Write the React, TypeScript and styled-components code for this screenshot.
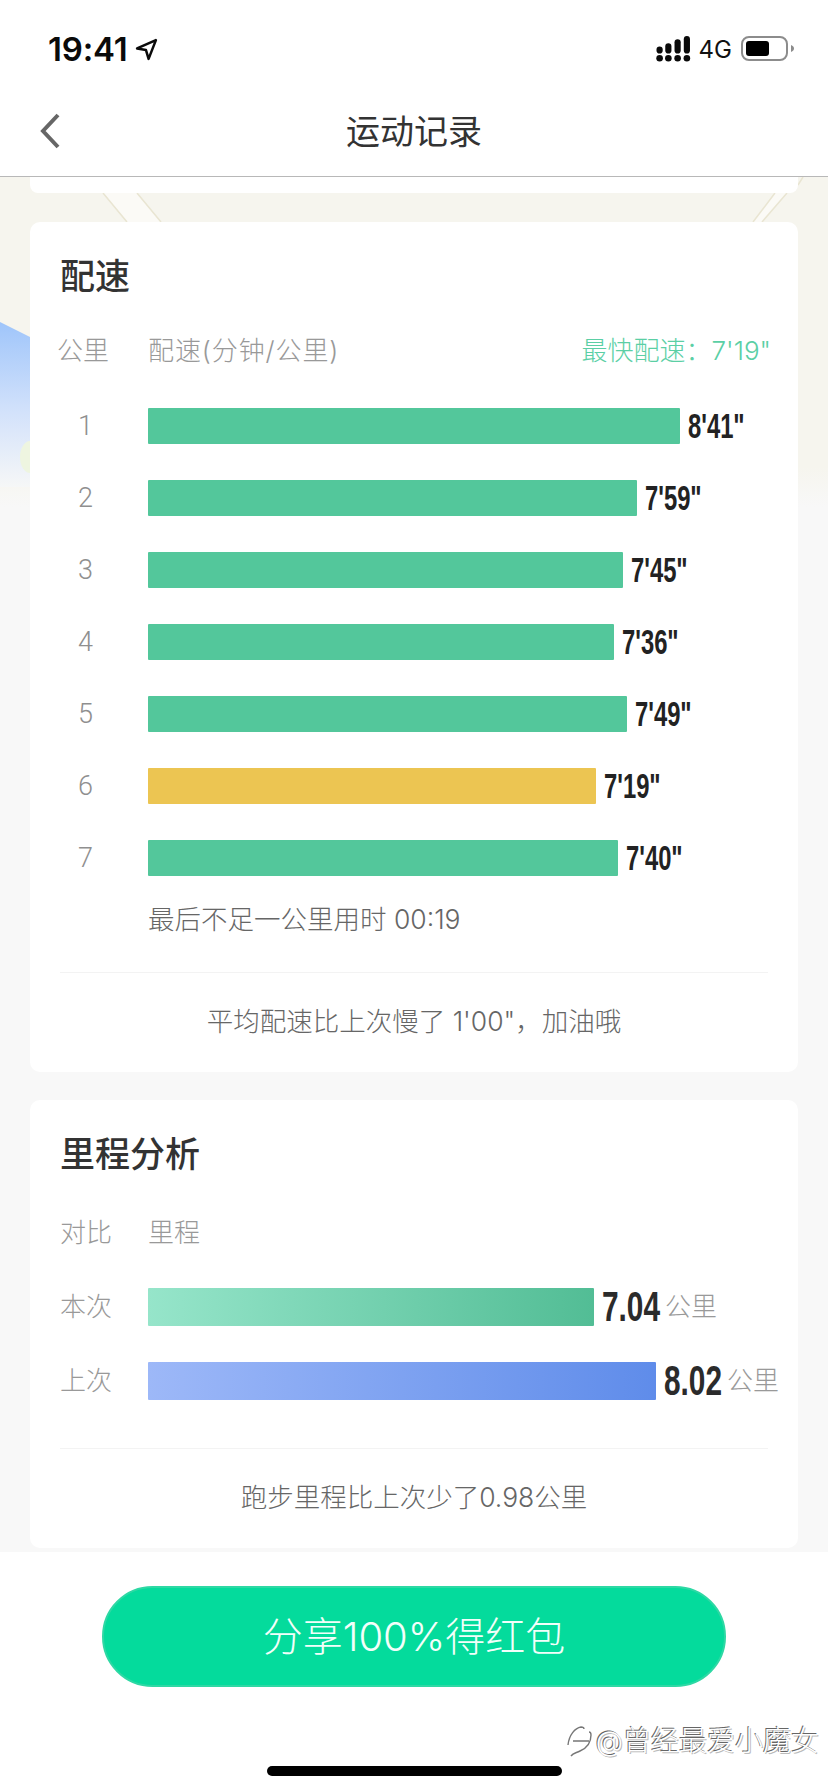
import { FC } from 'react';
import styled, { createGlobalStyle } from 'styled-components';

const CJK = `"Noto Sans CJK SC", "Noto Sans", sans-serif`;
const BODY = `Inter, ${CJK}`;

const GlobalStyle = createGlobalStyle`
  html, body {
    margin: 0;
    padding: 0;
    background: #fff;
    font-family: ${CJK};
  }
`;

const Page = styled.div`
  position: relative;
  display: flex;
  flex-direction: column;
  width: 828px;
  height: 1792px;
  overflow: hidden;
  background: #fff;
`;

const StatusBar = styled.div`
  display: flex;
  align-items: center;
  justify-content: space-between;
  height: 88px;
  padding: 10px 33px 0 48px;
  box-sizing: border-box;
`;

const StatusGroup = styled.div`
  display: flex;
  align-items: center;
`;

const Clock = styled.span`
  font-family: Inter, "Liberation Sans", sans-serif;
  font-size: 33px;
  font-weight: 600;
  letter-spacing: -0.2px;
  color: #0a0a0a;
  line-height: 36px;
  margin-right: 8px;
`;

const Network = styled.span`
  font-family: Inter, "Liberation Sans", sans-serif;
  font-size: 24px;
  color: #111;
  margin: 1px 9px 0 8px;
  line-height: 26px;
`;

const NavBar = styled.div`
  position: relative;
  display: flex;
  align-items: center;
  justify-content: center;
  height: 89px;
  box-sizing: border-box;
  padding-bottom: 4px;
  border-bottom: 1px solid #b8b8b8;
`;

const NavBack = styled.svg`
  position: absolute;
  left: 38px;
  top: 24px;
`;

const NavTitle = styled.h1`
  margin: 0;
  font-size: 34px;
  font-weight: 400;
  color: #333;
  line-height: 44px;
`;

const Content = styled.div`
  position: relative;
  flex: none;
  height: 1375px;
  box-sizing: border-box;
  padding: 0 30px;
  background: linear-gradient(
    to bottom,
    #f6f5ee 0,
    #f6f5ee 290px,
    #f8f8f8 330px,
    #f8f8f8 100%
  );
`;

const Backdrop = styled.svg`
  position: absolute;
  left: 0;
  top: 0;
`;

const CardStub = styled.div`
  position: relative;
  height: 16px;
  margin-bottom: 29px;
  background: #fff;
  border-radius: 0 0 8px 8px;
`;

const Card = styled.section`
  position: relative;
  display: flex;
  flex-direction: column;
  padding: 30px 30px 31px;
  margin-bottom: 28px;
  background: #fff;
  border-radius: 10px;
`;

const CardTitle = styled.h2`
  margin: 0;
  height: 46px;
  font-size: 35px;
  font-weight: 500;
  line-height: 43px;
  color: #333;
`;

const HeadRow = styled.div<{ $top: number }>`
  display: flex;
  align-items: center;
  height: 36px;
  box-sizing: border-box;
  padding-bottom: 4px;
  margin-top: ${(p) => p.$top}px;
  font-family: ${BODY};
  font-size: 26px;
  font-weight: 300;
  color: #999;
`;

const HeadLabel = styled.span<{ $shift?: number }>`
  flex: none;
  width: ${(p) => 88 + (p.$shift ?? 0)}px;
  margin-left: ${(p) => -(p.$shift ?? 0)}px;
`;

const HeadMain = styled.span<{ $tracking?: number }>`
  flex: 1;
  letter-spacing: ${(p) => p.$tracking ?? 0}px;
`;

const FastLabel = styled.span`
  color: #5bcfa5;
  margin-right: -3px;
`;

const PaceList = styled.div`
  display: flex;
  flex-direction: column;
  gap: 36px;
  margin-top: 40px;
`;

const PaceRow = styled.div`
  display: flex;
  align-items: center;
  height: 36px;
`;

const PaceIndex = styled.span`
  flex: none;
  width: 51px;
  margin-right: 37px;
  text-align: center;
  font-family: Roboto, ${CJK};
  font-size: 27px;
  font-weight: 300;
  color: #8f8f8f;
`;

const Bar = styled.div<{ $width: number; $fill: string }>`
  flex: none;
  width: ${(p) => p.$width}px;
  height: 100%;
  background: ${(p) => p.$fill};
  border-radius: 1px;
`;

// no condensed face is installed, so the bold numbers are squeezed
const PaceValue = styled.span`
  flex: none;
  width: 57px;
  margin-left: 8px;
  font-family: "Liberation Sans", sans-serif;
  font-size: 35px;
  font-weight: 700;
  line-height: 36px;
  white-space: nowrap;
  color: #222;
  transform: scaleX(0.68);
  transform-origin: left center;
`;

const Note = styled.div`
  height: 36px;
  margin: 25px 0 0 88px;
  font-family: ${BODY};
  font-size: 26.5px;
  font-weight: 300;
  line-height: 36px;
  color: #666;
`;

const Divider = styled.div<{ $top: number }>`
  height: 1px;
  margin-top: ${(p) => p.$top}px;
  background: #f3f3f3;
`;

const Summary = styled.div`
  height: 36px;
  margin-top: 32px;
  text-align: center;
  font-family: ${BODY};
  font-size: 26.5px;
  font-weight: 300;
  line-height: 32px;
  color: #666;
`;

const MileList = styled.div`
  display: flex;
  flex-direction: column;
  gap: 36px;
  margin-top: 38px;
`;

const MileRow = styled.div`
  display: flex;
  align-items: center;
  height: 38px;
`;

const MileLabel = styled.span`
  flex: none;
  width: 88px;
  height: 38px;
  font-family: ${BODY};
  font-size: 26px;
  font-weight: 300;
  line-height: 38px;
  color: #999;
`;

const MileValue = styled.span`
  flex: none;
  width: 58px;
  margin-left: 8px;
  font-family: "Liberation Sans", sans-serif;
  font-size: 42px;
  font-weight: 700;
  line-height: 38px;
  white-space: nowrap;
  color: #2b2b2b;
  transform: scaleX(0.71);
  transform-origin: left center;
`;

const MileUnit = styled.span`
  flex: none;
  margin-left: 5px;
  height: 38px;
  font-family: ${BODY};
  font-size: 26px;
  font-weight: 300;
  line-height: 38px;
  color: #999;
`;

const Footer = styled.div`
  position: relative;
  flex: 1;
  display: flex;
  flex-direction: column;
  align-items: center;
  padding-top: 34px;
  background: #fff;
`;

const ShareButton = styled.button`
  width: 624px;
  height: 101px;
  padding: 0 0 6px;
  border: 2px solid #2ed8a4;
  border-radius: 51px;
  background: #04db9c;
  color: #f2fffa;
  font-family: ${BODY};
  font-size: 40px;
  font-weight: 300;
`;

const HomeBar = styled.div`
  width: 295px;
  height: 10px;
  margin-top: 79px;
  background: #000;
  border-radius: 5px;
`;

const Watermark = styled.div`
  position: absolute;
  right: 9px;
  top: 169px;
  display: flex;
  align-items: center;
  font-family: ${BODY};
  font-size: 28px;
  font-weight: 300;
  line-height: 40px;
  color: #fff;
  text-shadow: -1px -1px 0 #666, 1px 1px 0 #bbb;
`;

const WatermarkIcon = styled.svg`
  margin-right: 3px;
`;

const paces = [
  { km: 1, width: 532, time: `8'41"` },
  { km: 2, width: 489, time: `7'59"` },
  { km: 3, width: 475, time: `7'45"` },
  { km: 4, width: 466, time: `7'36"` },
  { km: 5, width: 479, time: `7'49"` },
  { km: 6, width: 448, time: `7'19"`, best: true },
  { km: 7, width: 470, time: `7'40"` },
];

const miles = [
  { label: '本次', width: 446, value: '7.04', fill: 'linear-gradient(90deg, #96e5ca, #52bd95)' },
  { label: '上次', width: 508, value: '8.02', fill: 'linear-gradient(90deg, #9db8f8, #5f8cea)' },
];

const App: FC = () => {
  return (
    <Page>
      <GlobalStyle />
      <StatusBar>
        <StatusGroup>
          <Clock>19:41</Clock>
          <svg width="23" height="23" viewBox="0 0 22 22" fill="none">
            <path d="M20 2 2 10l8.500 1.500L13 20z" stroke="#0a0a0a" strokeWidth="2.4" strokeLinejoin="round" />
          </svg>
        </StatusGroup>
        <StatusGroup>
          <svg width="35" height="27" viewBox="0 0 34 26" fill="#0a0a0a">
            <circle cx="3.500" cy="21.500" r="3.200" />
            <circle cx="12" cy="21.500" r="3.200" />
            <circle cx="21" cy="21.500" r="3.200" />
            <circle cx="30" cy="21.500" r="3.200" />
            <rect x="0.500" y="10" width="6" height="7" rx="3" />
            <rect x="9" y="7" width="6" height="10" rx="3" />
            <rect x="18" y="3" width="6" height="14" rx="3" />
            <rect x="27" y="0" width="6" height="17" rx="3" />
          </svg>
          <Network>4G</Network>
          <svg width="54" height="26" viewBox="0 0 54 26">
            <rect x="1" y="1" width="45" height="23" rx="7" fill="none" stroke="#8c8c8c" strokeWidth="2" />
            <rect x="5" y="5" width="23" height="15" rx="3" fill="#000" />
            <path d="M50 9c2 1 3 2 3 3.500s-1 2.500-3 3.500z" fill="#8c8c8c" />
          </svg>
        </StatusGroup>
      </StatusBar>

      <NavBar>
        <NavBack width="24" height="38" viewBox="0 0 24 38" fill="none">
          <path d="M20 3 5 19l15 16" stroke="#666" strokeWidth="4" />
        </NavBack>
        <NavTitle>运动记录</NavTitle>
      </NavBar>

      <Content>
        <Backdrop width="828" height="340" viewBox="0 0 828 340">
          <defs>
            <linearGradient id="sky" x1="0" y1="0" x2="0" y2="1">
              <stop offset="0" stopColor="#9fc5fa" />
              <stop offset="0.55" stopColor="#d3e2fb" />
              <stop offset="1" stopColor="#f6f7f7" />
            </linearGradient>
          </defs>
          <path d="M0 145 30 160V310H0z" fill="url(#sky)" />
          <ellipse cx="30" cy="280" rx="10" ry="16" fill="#eef5e0" />
          <path d="M103 16h34l24 29h-34z" fill="#fbfaf6" />
          <path d="M103 16l24 29M137 16l24 29" stroke="#e9e5d2" strokeWidth="1.500" />
          <path d="M753 45l22-29h12l-25 29z" fill="#fbfaf6" />
          <path d="M753 45l22-29M762 45l25-29M798 8l5-8" stroke="#e9e5d2" strokeWidth="1.500" />
        </Backdrop>

        <CardStub />

        <Card>
          <CardTitle>配速</CardTitle>
          <HeadRow $top={34}>
            <HeadLabel $shift={3}>公里</HeadLabel>
            <HeadMain $tracking={0.9}>配速(分钟/公里)</HeadMain>
            <FastLabel>最快配速：7'19"</FastLabel>
          </HeadRow>
          <PaceList>
            {paces.map((pace) => (
              <PaceRow key={pace.km}>
                <PaceIndex>{pace.km}</PaceIndex>
                <Bar $width={pace.width} $fill={pace.best ? '#ecc552' : '#53c79b'} />
                <PaceValue>{pace.time}</PaceValue>
              </PaceRow>
            ))}
          </PaceList>
          <Note>最后不足一公里用时 00:19</Note>
          <Divider $top={35} />
          <Summary>平均配速比上次慢了 1'00"，加油哦</Summary>
        </Card>

        <Card>
          <CardTitle>里程分析</CardTitle>
          <HeadRow $top={38}>
            <HeadLabel>对比</HeadLabel>
            <HeadMain>里程</HeadMain>
          </HeadRow>
          <MileList>
            {miles.map((mile) => (
              <MileRow key={mile.label}>
                <MileLabel>{mile.label}</MileLabel>
                <Bar $width={mile.width} $fill={mile.fill} />
                <MileValue>{mile.value}</MileValue>
                <MileUnit>公里</MileUnit>
              </MileRow>
            ))}
          </MileList>
          <Divider $top={48} />
          <Summary>跑步里程比上次少了0.98公里</Summary>
        </Card>
      </Content>

      <Footer>
        <ShareButton>分享100%得红包</ShareButton>
        <HomeBar />
        <Watermark>
          <WatermarkIcon width="27" height="34" viewBox="0 0 27 34" fill="none">
            <path d="M2 21C3 11 9 4 15 3c2 0 3 1 3 2M5 32c2-3 5-3 9-5 7-3 11-9 11-16 0-2-1-3-2-3M7 17h16" stroke="#777" strokeWidth="1.400" />
          </WatermarkIcon>
          @曾经最爱小魔女
        </Watermark>
      </Footer>
    </Page>
  );
};

export default App;
